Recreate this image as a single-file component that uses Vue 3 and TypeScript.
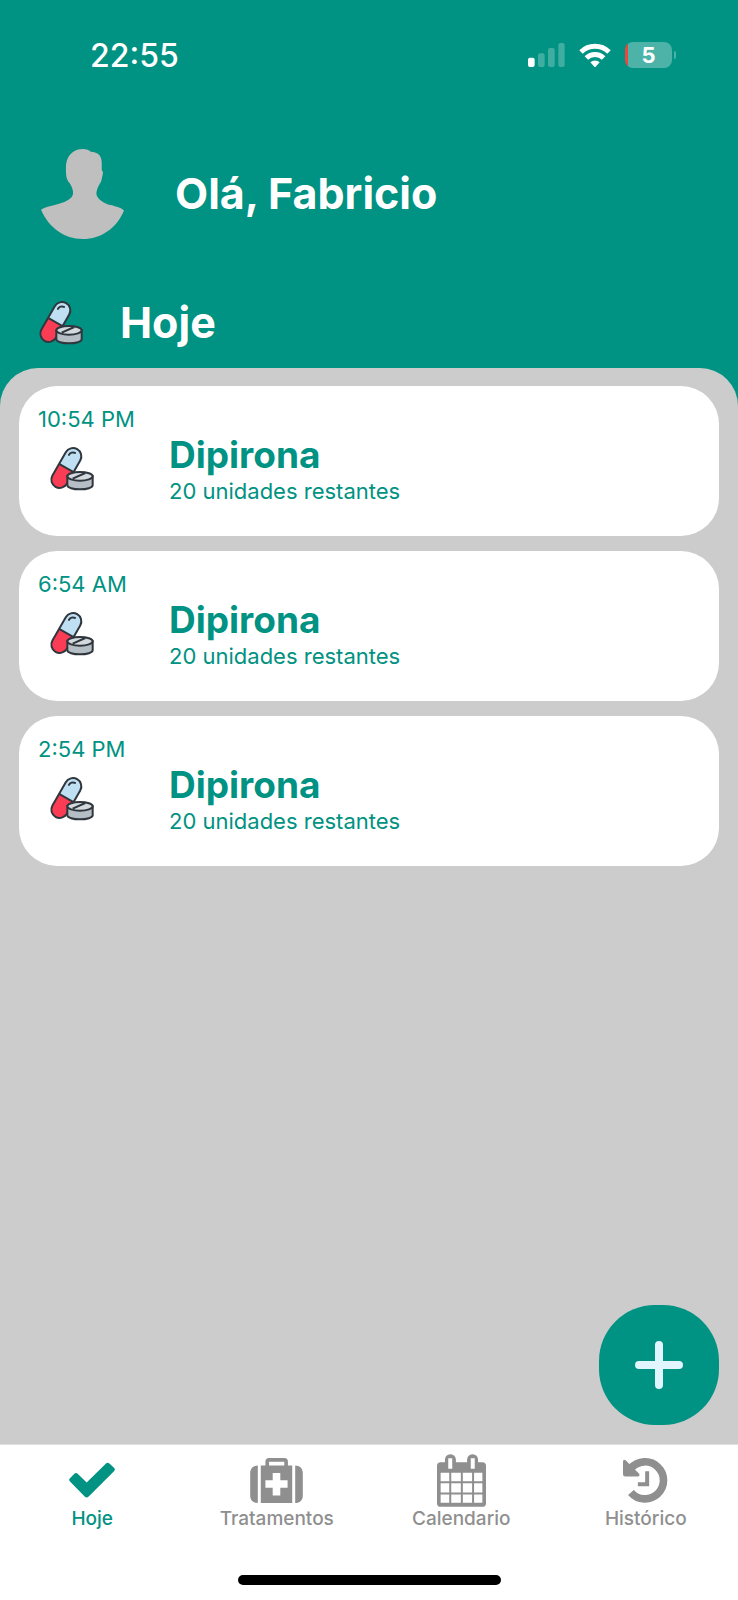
<script setup lang="ts">
import { ref } from 'vue'

interface Dose {
  time: string
  name: string
  remaining: string
}

type TabId = 'today' | 'treatments' | 'calendar' | 'history'

const doses: Dose[] = [
  { time: '10:54 PM', name: 'Dipirona', remaining: '20 unidades restantes' },
  { time: '6:54 AM', name: 'Dipirona', remaining: '20 unidades restantes' },
  { time: '2:54 PM', name: 'Dipirona', remaining: '20 unidades restantes' },
]

const tabs: { id: TabId; label: string }[] = [
  { id: 'today', label: 'Hoje' },
  { id: 'treatments', label: 'Tratamentos' },
  { id: 'calendar', label: 'Calendario' },
  { id: 'history', label: 'Histórico' },
]

const active = ref<TabId>('today')
</script>

<template>
  <div class="app">
    <svg class="defs" aria-hidden="true">
      <symbol id="pills" viewBox="0 0 135 135">
        <g transform="translate(52 66) rotate(30)">
          <path d="M-25 0v-40a25 25 0 0 1 50 0V0z" fill="#bfe0f3" />
          <path d="M-25 0v40a25 25 0 0 0 50 0V0z" fill="#fb3c55" />
          <path d="M-25-40a25 25 0 0 1 50 0v80a25 25 0 0 1-50 0zM-25 0h50" fill="none" stroke="#30363d" stroke-width="6" />
          <path d="M-13-38a13 13 0 0 1 13-14" fill="none" stroke="#30363d" stroke-width="6" stroke-linecap="round" />
        </g>
        <path d="M55 91v27c0 7 17 12 38 12s38-5 38-12V91z" fill="#b4bec4" stroke="#30363d" stroke-width="6" />
        <ellipse cx="93" cy="91" rx="38" ry="13" fill="#d3d9dc" stroke="#30363d" stroke-width="6" />
        <path d="M71 98l38-17" stroke="#30363d" stroke-width="6" />
      </symbol>
    </svg>

    <header class="header">
      <div class="status">
        <span class="clock">22:55</span>
        <div class="indicators">
          <svg class="signal" viewBox="0 0 111 72" aria-hidden="true">
            <rect x="0" y="44" width="20" height="28" rx="6" fill="#fff" />
            <g fill="#fff" opacity=".25">
              <rect x="30" y="31" width="20" height="41" rx="6" />
              <rect x="60" y="15" width="20" height="57" rx="6" />
              <rect x="91" y="0" width="19" height="72" rx="6" />
            </g>
          </svg>
          <svg class="wifi" viewBox="0 0 96 72" aria-hidden="true">
            <g fill="none" stroke="#fff" stroke-width="15">
              <path d="M6 27a60 60 0 0 1 84 0" />
              <path d="M22 45a37 37 0 0 1 52 0" />
            </g>
            <path d="M34 58a20 20 0 0 1 28 0L50 71q-2 2-4 0z" fill="#fff" />
          </svg>
          <div class="battery"><span class="level">5</span></div>
        </div>
      </div>

      <div class="profile">
        <svg class="avatar" viewBox="62 54 250 272" aria-hidden="true">
          <path d="M137 115C136 78 157 56 189 56c10 0 17 3 23 8 22 1 33 12 33 34v22c5 3 4 12 1 20-1 10-4 17-7 21-8 15-13 28-8 37 8 14 25 23 42 27 17 5 29 8 39 16-22 53-68 86-124 86-57 0-102-34-126-88 11-8 28-11 46-16 19-5 35-11 46-22 7-8 5-19 0-32-3-8-7-11-11-17-5-9-6-20-6-37z" fill="#bfbfbf" />
        </svg>
        <h1 class="title">Olá, Fabricio</h1>
      </div>

      <div class="section">
        <svg class="pills" aria-hidden="true"><use href="#pills" /></svg>
        <h2 class="title">Hoje</h2>
      </div>
    </header>

    <main class="content">
      <div class="sheet">
        <article v-for="dose in doses" :key="dose.time" class="card">
          <time class="small">{{ dose.time }}</time>
          <div class="dose">
            <div class="thumb">
              <svg class="pills" aria-hidden="true"><use href="#pills" /></svg>
            </div>
            <div>
              <h3 class="name">{{ dose.name }}</h3>
              <p class="small">{{ dose.remaining }}</p>
            </div>
          </div>
        </article>
        <button class="add" type="button" aria-label="Adicionar">
          <svg viewBox="0 0 48 48" aria-hidden="true">
            <path d="M24 4v40M4 24h40" fill="none" stroke="#e1f5fe" stroke-width="8" stroke-linecap="round" />
          </svg>
        </button>
      </div>
    </main>

    <footer class="footer">
      <nav class="tabs">
        <button
          v-for="tab in tabs"
          :key="tab.id"
          type="button"
          class="tab"
          :class="{ active: tab.id === active }"
          @click="active = tab.id"
        >
          <span class="icon">
            <svg v-if="tab.id === 'today'" width="46" height="36" viewBox="88 70 138 107" aria-hidden="true">
              <path d="M91 118l13-13q5-5 10 0l27 26 58-57q5-5 10 0l14 13q5 5 0 10l-76 76q-6 6-12 0l-44-45q-5-5 0-10z" fill="currentColor" />
            </svg>
            <svg v-else-if="tab.id === 'treatments'" width="53" height="45" viewBox="630 53 159 136" aria-hidden="true">
              <path d="M653 76v113c-14 0-23-9-23-23V99c0-14 9-23 23-23zM766 76c14 0 23 9 23 23v67c0 14-9 23-23 23z" fill="currentColor" />
              <path fill-rule="evenodd" d="M662 76h14V64q0-11 11-11h46q11 0 11 11v12h13v113h-95zM687 64v12h46V64zM698 98v22h-22v23h22v23h23v-23h22v-23h-22V98z" fill="currentColor" />
            </svg>
            <svg v-else-if="tab.id === 'calendar'" width="49" height="53" viewBox="140 41 148 159" aria-hidden="true">
              <rect x="140" y="65" width="148" height="135" rx="11" fill="currentColor" />
              <rect x="164" y="41" width="33" height="50" rx="16" fill="currentColor" />
              <rect x="231" y="41" width="33" height="50" rx="16" fill="currentColor" />
              <path d="M174 53h12v32h-12zM242 53h12v32h-12zM151 97h26v26h-26zM183 97h29v26h-29zM218 97h28v26h-28zM252 97h25v26h-25zM151 129h26v28h-26zM183 129h29v28h-29zM218 129h28v28h-28zM252 129h25v28h-25zM151 163h26v25h-26zM183 163h29v25h-29zM218 163h28v25h-28zM252 163h25v25h-25z" fill="#fff" />
            </svg>
            <svg v-else width="45" height="45" viewBox="698 53 136 136" aria-hidden="true">
              <path d="M722 84a56 56 0 1 1 0 73" fill="none" stroke="currentColor" stroke-width="23" />
              <path d="M698 63q1-8 8-3l40 40q5 8-3 9h-38q-7 0-7-7z" fill="currentColor" />
              <path d="M771 93v39h-28" fill="none" stroke="currentColor" stroke-width="12" />
            </svg>
          </span>
          <span class="label">{{ tab.label }}</span>
        </button>
      </nav>
      <div class="home"></div>
    </footer>
  </div>
</template>

<style>
body {
  margin: 0;
}
</style>

<style scoped>
.app {
  --teal: #009282;
  --gray: #ccc;
  display: flex;
  flex-direction: column;
  min-height: 100vh;
  font-family: Inter, 'Liberation Sans', sans-serif;
  background: var(--teal);
}

.defs {
  position: absolute;
  width: 0;
  height: 0;
}

h1,
h2,
h3,
p {
  margin: 0;
}

button {
  padding: 0;
  border: 0;
  font: inherit;
  cursor: pointer;
}

.header {
  color: #fff;
}

.status {
  display: flex;
  align-items: center;
  justify-content: space-between;
  height: 110px;
  padding: 0 66px 0 90px;
}

.clock {
  padding-top: 2px;
  font-size: 32px;
  font-weight: 500;
  line-height: 40px;
}

.indicators {
  display: flex;
  align-items: center;
  gap: 14px;
}

.signal {
  width: 37px;
  height: 24px;
}

.wifi {
  width: 32px;
  height: 24px;
}

.battery {
  position: relative;
  display: flex;
  align-items: center;
  justify-content: center;
  width: 47px;
  height: 26px;
  border-radius: 8px;
  background: linear-gradient(to right, #f0453c 3px, #4db3a8 3px);
}

.battery::after {
  content: '';
  position: absolute;
  left: 49px;
  top: 9px;
  width: 2px;
  height: 8px;
  border-radius: 0 4px 4px 0;
  background: #4db3a8;
}

.level {
  font-size: 22px;
  font-weight: 700;
  line-height: 26px;
}

.profile {
  display: flex;
  align-items: center;
  gap: 51px;
  height: 166px;
  padding-left: 41px;
}

.avatar {
  width: 83px;
  height: 91px;
}

.title {
  font-size: 43px;
  font-weight: 700;
  line-height: 56px;
}

.section {
  display: flex;
  align-items: center;
  gap: 37px;
  height: 92px;
  padding-left: 38px;
}

.pills {
  flex: none;
  width: 45px;
  height: 45px;
}

.content {
  display: flex;
  flex: 1;
}

.sheet {
  position: relative;
  display: flex;
  flex: 1;
  flex-direction: column;
  gap: 15px;
  padding: 18px 19px;
  border-radius: 38px 38px 0 0;
  background: var(--gray);
}

.card {
  box-sizing: border-box;
  min-height: 150px;
  padding: 20px 19px;
  border-radius: 38px;
  background: #fff;
  color: var(--teal);
}

.small {
  display: block;
  font-size: 22px;
  line-height: 26px;
}

.dose {
  display: flex;
}

.thumb {
  flex: none;
  width: 120px;
  padding: 14px 0 0 11px;
}

.name {
  font-size: 37px;
  font-weight: 700;
  line-height: 46px;
}

.add {
  position: absolute;
  right: 19px;
  bottom: 19px;
  display: flex;
  align-items: center;
  justify-content: center;
  width: 120px;
  height: 120px;
  border-radius: 56px;
  background: var(--teal);
}

.add svg {
  width: 48px;
  height: 48px;
}

.footer {
  padding-bottom: 15px;
  border-top: 1px solid #dfdfdf;
  background: #fff;
}

.tabs {
  display: grid;
  grid-template-columns: repeat(4, 1fr);
  padding: 8px 0 44px;
}

.tab {
  display: flex;
  flex-direction: column;
  align-items: center;
  background: none;
  color: #8f8f8f;
}

.tab.active {
  color: var(--teal);
}

.icon {
  display: flex;
  align-items: center;
  height: 54px;
}

.label {
  font-size: 19px;
  font-weight: 500;
  line-height: 24px;
}

.home {
  width: 263px;
  height: 10px;
  margin: 0 auto;
  border-radius: 5px;
  background: #000;
}
</style>
